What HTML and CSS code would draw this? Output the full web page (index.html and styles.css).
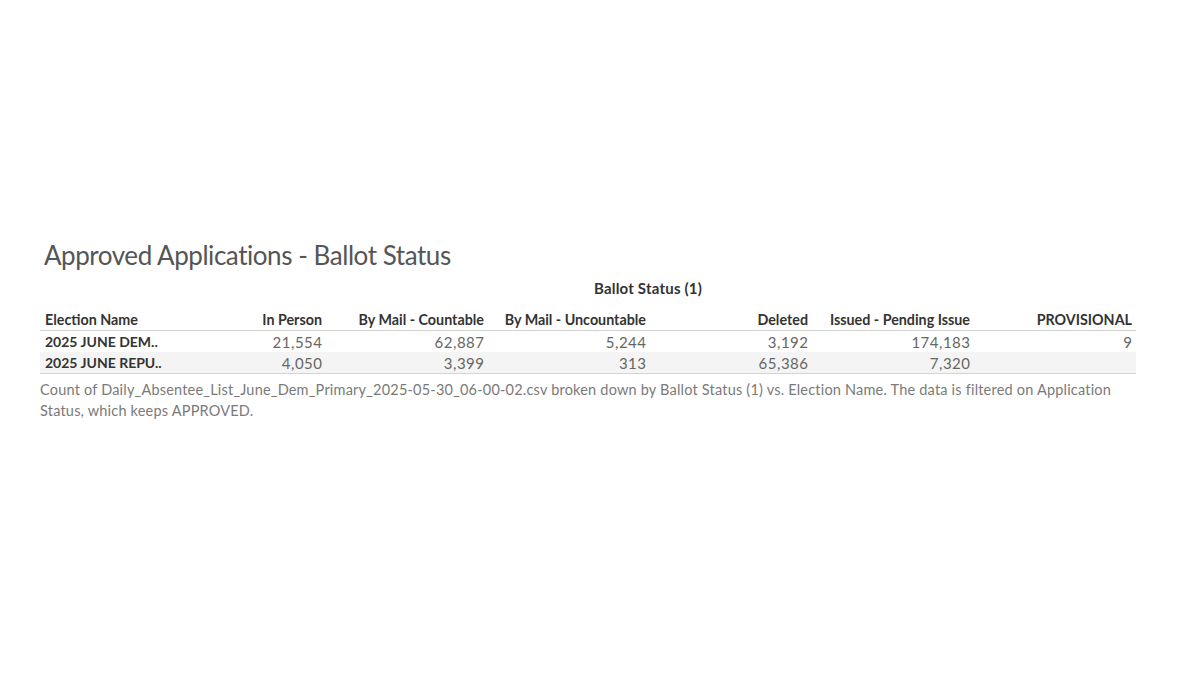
FILE: index.html
```html
<!DOCTYPE html>
<html lang="en">
<head>
<meta charset="utf-8">
<title>Approved Applications - Ballot Status</title>
<link rel="stylesheet" href="styles.css">
</head>
<body>
<main class="page">
  <section class="viz">
    <h1 class="title">Approved Applications - Ballot Status</h1>
    <div class="table">
      <div class="group-row">
        <div class="group-spacer"></div>
        <div class="group-label">Ballot Status (1)</div>
      </div>
      <div class="row head">
        <div class="cell name">Election Name</div>
        <div class="cell hnum">In Person</div>
        <div class="cell hnum">By Mail - Countable</div>
        <div class="cell hnum">By Mail - Uncountable</div>
        <div class="cell hnum">Deleted</div>
        <div class="cell hnum">Issued - Pending Issue</div>
        <div class="cell hnum">PROVISIONAL</div>
      </div>
      <div class="row">
        <div class="cell name">2025 JUNE DEM..</div>
        <div class="cell num">21,554</div>
        <div class="cell num">62,887</div>
        <div class="cell num">5,244</div>
        <div class="cell num">3,192</div>
        <div class="cell num">174,183</div>
        <div class="cell num">9</div>
      </div>
      <div class="row alt">
        <div class="cell name">2025 JUNE REPU..</div>
        <div class="cell num">4,050</div>
        <div class="cell num">3,399</div>
        <div class="cell num">313</div>
        <div class="cell num">65,386</div>
        <div class="cell num">7,320</div>
        <div class="cell num"></div>
      </div>
    </div>
    <p class="caption">Count of Daily_Absentee_List_June_Dem_Primary_2025-05-30_06-00-02.csv broken down by Ballot Status (1) vs. Election Name. The data is filtered on Application Status, which keeps APPROVED.</p>
  </section>
</main>
</body>
</html>
```

FILE: styles.css
```css
html, body {
  margin: 0;
  padding: 0;
  background: #ffffff;
}

body {
  font-family: Lato, "Open Sans", "Liberation Sans", sans-serif;
  color: #333333;
}

.page {
  width: 1200px;
  height: 675px;
  box-sizing: border-box;
  padding: 238px 0 0 40px;
}

.viz {
  width: 1096px;
}

.title {
  margin: 0 0 0 4px;
  font-size: 26px;
  line-height: 34px;
  font-weight: 400;
  color: #555555;
  letter-spacing: -0.45px;
}

.table {
  margin-top: 5px;
  font-size: 14px;
}

.group-row {
  display: grid;
  grid-template-columns: 120px 976px;
  height: 22px;
  align-items: center;
}

.group-label {
  text-align: center;
  font-weight: 700;
  font-size: 15px;
  letter-spacing: 0.2px;
  color: #333333;
}

.row {
  display: grid;
  grid-template-columns: 120px repeat(6, 162px) 4px;
  height: 21px;
  align-items: center;
  color: #666666;
}

.row.head {
  margin-top: 11px;
  height: 20px;
  border-bottom: 1px solid #d4d4d4;
  font-weight: 700;
  font-size: 14.3px;
  color: #333333;
}

.row.alt {
  background: #f4f4f4;
  border-bottom: 1px solid #d4d4d4;
}

.cell {
  white-space: nowrap;
  line-height: 20px;
}

.cell.name {
  padding-left: 5px;
  font-weight: 700;
  color: #333333;
}

.cell.hnum {
  text-align: right;
}

.cell.num {
  text-align: right;
  font-size: 15px;
  letter-spacing: 0.5px;
  margin-right: -0.5px;
}

.caption {
  margin: 5px 0 0 0;
  font-size: 14.5px;
  line-height: 21px;
  letter-spacing: 0.2px;
  color: #7a7a7a;
  max-width: 1085px;
}
```
